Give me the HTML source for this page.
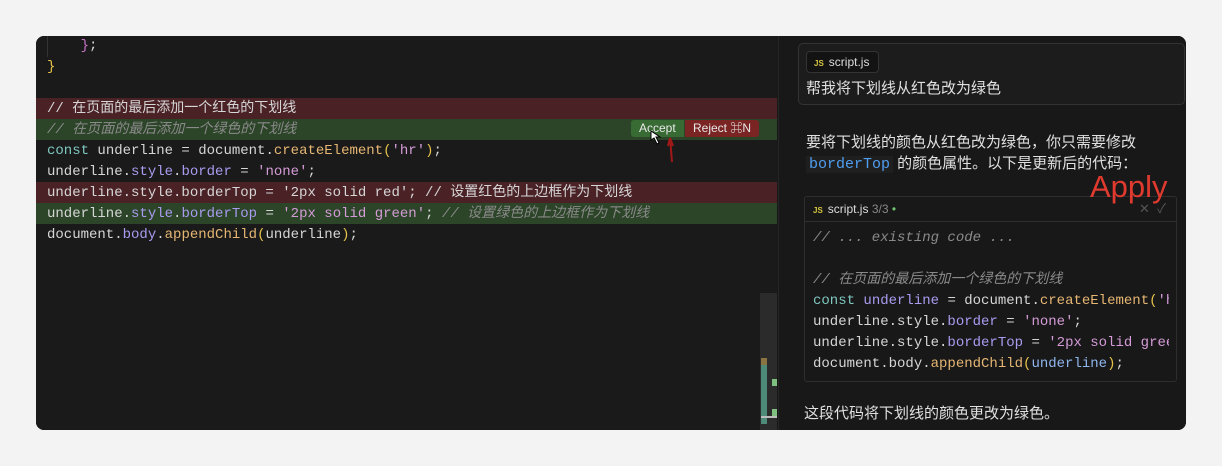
<!DOCTYPE html>
<html><head><meta charset="utf-8"><style>
body{margin:0;width:1222px;height:466px;background:#f3f3f3;position:relative;overflow:hidden;font-family:"Liberation Sans","Noto Sans CJK SC",sans-serif}
.win{position:absolute;left:36px;top:36px;width:1150px;height:394px;background:#181818;border-radius:8px;overflow:hidden}
.ed{position:absolute;left:0;top:0;width:741px;height:394px;background:#1a1a1a}
.ln{position:absolute;left:0;width:741px;height:21px;font:14px/21px "Liberation Mono","Noto Sans CJK SC",monospace;color:#d6d6d6;white-space:pre;padding-left:11px;box-sizing:border-box}
.r{background:#4a2226}.g{background:#2c4528}
.cm{color:#8a8a8a;font-style:italic}
.k{color:#7fc8c0}.p{color:#a99bf0}.s{color:#d59bd8}.f{color:#e6b673}.y{color:#e6c24a}.m{color:#c874c8}.v{color:#8fb7ee}
.side{position:absolute;left:742px;top:0;width:408px;height:394px;background:#181818;border-left:1px solid #262626}
.btn{position:absolute;font-size:12px;color:#e8e8e8;height:17px;line-height:17px;padding:0 8px;top:84px}
.cf{font:14px/21px "Liberation Mono","Noto Sans CJK SC",monospace;color:#d6d6d6;white-space:pre}
</style></head><body>
<div class="win">
<div class="ed">
 <div style="position:absolute;left:11px;top:0;width:1px;height:21px;background:#333"></div>
 <div class="ln" style="top:0px">    <span class="m">}</span>;</div>
 <div class="ln" style="top:21px"><span class="y">}</span></div>
 <div class="ln r" style="top:62px;line-height:23px">// 在页面的最后添加一个红色的下划线</div>
 <div class="ln g" style="top:83px;line-height:23px"><span class="cm">// 在页面的最后添加一个绿色的下划线</span></div>
 <div class="ln" style="top:105px"><span class="k">const</span> underline = document.<span class="f">createElement</span><span class="y">(</span><span class="s">'hr'</span><span class="y">)</span>;</div>
 <div class="ln" style="top:126px">underline.<span class="p">style</span>.<span class="p">border</span> = <span class="s">'none'</span>;</div>
 <div class="ln r" style="top:146px;line-height:23px">underline.style.borderTop = '2px solid red'; // 设置红色的上边框作为下划线</div>
 <div class="ln g" style="top:167px;line-height:23px">underline.<span class="p">style</span>.<span class="p">borderTop</span> = <span class="s">'2px solid green'</span>; <span class="cm">// 设置绿色的上边框作为下划线</span></div>
 <div class="ln" style="top:189px">document.<span class="p">body</span>.<span class="f">appendChild</span><span class="y">(</span>underline<span class="y">)</span>;</div>
 <div class="btn" style="left:595px;background:#386a34;border-radius:3px 0 0 3px">Accept</div>
 <div class="btn" style="left:649px;background:#7b2424;border-radius:0 3px 3px 0">Reject ⌘N</div>
 <svg style="position:absolute;left:612px;top:92px" width="30" height="40"><path d="M3 3 L3 12 L6 10 L9 16 L11 15 L8 9 L12 9 Z" fill="#fff" stroke="#000" stroke-width="1"/><path d="M24 34 L22 10 L20 18 M22 10 L25 18" stroke="#a01818" stroke-width="2" fill="none"/></svg>
 <div style="position:absolute;left:724px;top:257px;width:17px;height:137px;background:#2b2b2b"></div>
 <div style="position:absolute;left:725px;top:322px;width:6px;height:7px;background:#8a7442"></div>
 <div style="position:absolute;left:725px;top:329px;width:6px;height:59px;background:#4e8a78"></div>
 <div style="position:absolute;left:736px;top:343px;width:5px;height:7px;background:#7fbf7f"></div>
 <div style="position:absolute;left:736px;top:373px;width:5px;height:7px;background:#7fbf7f"></div>
 <div style="position:absolute;left:725px;top:380px;width:16px;height:2px;background:#bbb"></div>
</div>
<div class="side">
 <div style="position:absolute;left:19px;top:7px;width:385px;height:60px;border:1px solid #333;border-radius:5px;background:#1c1c1c"></div>
 <div style="position:absolute;left:27px;top:15px;width:71px;height:20px;border:1px solid #333;border-radius:4px;background:#131313;font-size:12px;line-height:20px;color:#ddd"><span style="color:#d6c640;font-size:8px;font-weight:bold;margin:0 5px 0 7px">JS</span>script.js</div>
 <div style="position:absolute;left:27px;top:41px;font-size:15px;color:#e0e0e0">帮我将下划线从红色改为绿色</div>
 <div style="position:absolute;left:27px;top:96px;font-size:15px;color:#e0e0e0;line-height:21px">要将下划线的颜色从红色改为绿色，你只需要修改<br><span style="font-family:'Liberation Mono',monospace;font-size:15px;color:#4f9ef0;background:#1f1f1f;padding:0 3px">borderTop</span> 的颜色属性。以下是更新后的代码：</div>
 <div style="position:absolute;left:25px;top:160px;width:371px;height:184px;border:1px solid #2e2e2e;border-radius:3px;background:#181818">
  <div style="height:24px;border-bottom:1px solid #2e2e2e;font-size:12px;line-height:24px;color:#ddd;padding-left:8px"><span style="color:#d6c640;font-size:8px;font-weight:bold;margin-right:5px">JS</span>script.js <span style="color:#888">3/3</span> <span style="color:#6fc36f">•</span><span style="position:absolute;right:10px;color:#555;font-size:13px">✕ &nbsp;✓</span></div>
  <div class="cf" style="position:absolute;left:8px;top:31px;overflow:hidden;width:356px"><span class="cm">// ... existing code ...</span>

<span class="cm">// 在页面的最后添加一个绿色的下划线</span>
<span class="k">const</span> <span class="p">underline</span> = document.<span class="f">createElement</span><span class="y">(</span><span class="s">'hr'</span>
underline.style.<span class="p">border</span> = <span class="s">'none'</span>;
underline.style.<span class="p">borderTop</span> = <span class="s">'2px solid green'</span>
document.body.<span class="f">appendChild</span><span class="y">(</span><span class="v">underline</span><span class="y">)</span>;</div>
 </div>
 <div style="position:absolute;left:311px;top:133px;font-size:31px;color:#e03a2f;z-index:5">Apply</div>
 <div style="position:absolute;left:25px;top:366px;font-size:15px;color:#e0e0e0">这段代码将下划线的颜色更改为绿色。</div>
</div>
</div>
</body></html>
